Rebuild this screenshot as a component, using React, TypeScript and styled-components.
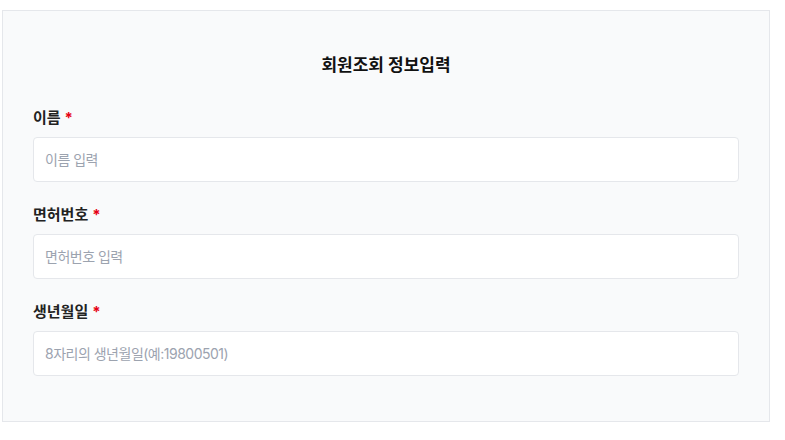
import { createGlobalStyle, styled } from "styled-components";

const GlobalStyle = createGlobalStyle`
    body {
        margin: 0;
        background: #ffffff;
        font-family: "Inter", "Noto Sans CJK KR", sans-serif;
    }
`;

const Card = styled.section`
    box-sizing: border-box;
    width: 768px;
    margin: 10px 0 0 2px;
    padding: 41px 30px 45px;
    background-color: #f9fafb;
    border: 1px solid #e5e7eb;
    display: flex;
    flex-direction: column;
`;

const Title = styled.h2`
    margin: 0 0 30px;
    text-align: center;
    font-size: 17px;
    line-height: 26px;
    font-weight: 700;
    color: #111111;
`;

const Field = styled.div`
    display: flex;
    flex-direction: column;
    gap: 9px;
    margin-bottom: 23px;

    &:last-child {
        margin-bottom: 0;
    }
`;

const Label = styled.label`
    font-size: 15px;
    line-height: 20px;
    font-weight: 700;
    color: #222222;
`;

const Required = styled.span`
    color: #e60012;
    margin-left: 4px;
`;

const Input = styled.input`
    box-sizing: border-box;
    width: 100%;
    height: 45px;
    padding: 0 11px;
    background: #ffffff;
    border: 1px solid #e5e7eb;
    border-radius: 4px;
    font-family: "Inter", "Noto Sans CJK KR", sans-serif;
    font-size: 14px;
    letter-spacing: -0.5px;
    color: #222222;
    outline: none;

    &::placeholder {
        color: #9ca3af;
    }
`;

const fields = [
    { id: "name", label: "이름", placeholder: "이름 입력" },
    { id: "license", label: "면허번호", placeholder: "면허번호 입력" },
    { id: "birth", label: "생년월일", placeholder: "8자리의 생년월일(예:19800501)" },
];

export default function App() {
    return (
        <>
            <GlobalStyle />
            <Card>
                <Title>회원조회 정보입력</Title>
                {fields.map((f) => (
                    <Field key={f.id}>
                        <Label htmlFor={f.id}>
                            {f.label}
                            <Required>*</Required>
                        </Label>
                        <Input id={f.id} placeholder={f.placeholder} />
                    </Field>
                ))}
            </Card>
        </>
    );
}
